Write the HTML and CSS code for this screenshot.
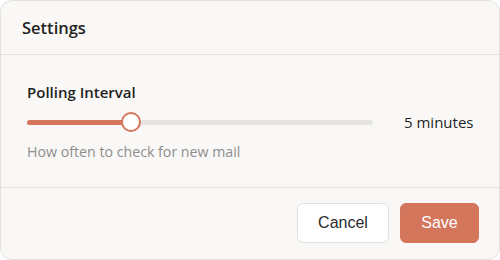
FILE: index.html
```html
<!DOCTYPE html>
<html>
<head>
<meta charset="utf-8">
<link rel="stylesheet" href="styles.css">
</head>
<body>
<div class="card">
  <div class="header"><h2 class="title">Settings</h2></div>
  <div class="body">
    <div class="label">Polling Interval</div>
    <div class="row">
      <div class="track"><div class="fill" style="width:30%"></div><div class="thumb" style="left:30%"></div></div>
      <div class="value">5 minutes</div>
    </div>
    <div class="desc">How often to check for new mail</div>
  </div>
  <div class="footer">
    <button class="btn cancel">Cancel</button>
    <button class="btn save">Save</button>
  </div>
</div>
</body>
</html>
```
FILE: styles.css
```css
html, body { margin: 0; padding: 0; background: #ffffff; }
body { width: 500px; height: 260px; font-family: "Open Sans", "Noto Sans", sans-serif; }
.card {
  box-sizing: border-box;
  width: 500px; height: 260px;
  background: #f9f8f6;
  border: 1px solid #e3e1dd;
  border-radius: 12px;
  display: flex; flex-direction: column;
}
.header {
  height: 53px;
  border-bottom: 1px solid #e3e1dd;
  display: flex; align-items: center;
  padding: 0 21px;
}
.title { margin: 0; font-size: 16.5px; font-weight: 600; color: #1f1f1f; }
.body {
  flex: 1;
  padding: 26px 20px 0 26px;
  border-bottom: 1px solid #e3e1dd;
}
.label { font-size: 15px; font-weight: 600; color: #1f1f1f; line-height: 22px; }
.row { display: flex; align-items: center; margin-top: 8px; height: 22px; }
.track {
  position: relative;
  flex: 0 0 346px;
  height: 5px;
  background: #e6e4e0;
  border-radius: 3px;
}
.fill { height: 100%; background: #d4765c; border-radius: 3px; }
.thumb {
  position: absolute; top: 50%;
  width: 16px; height: 16px;
  margin-left: -10px; margin-top: -10px;
  border: 2px solid #d4765c;
  background: #ffffff;
  border-radius: 50%;
}
.value { margin-left: 31px; font-size: 15px; color: #1f1f1f; white-space: nowrap; }
.desc { margin-top: 10px; font-size: 14.2px; color: #8d8d8d; line-height: 18px; }
.footer {
  height: 71px;
  box-sizing: border-box;
  display: flex; justify-content: flex-end; align-items: flex-start;
  padding: 15px 20px 0 0;
  gap: 11px;
}
.btn {
  height: 40px;
  font-family: "Liberation Sans", Arial, sans-serif;
  font-size: 16px;
  border-radius: 6px;
  padding: 0 20px;
  cursor: pointer;
}
.cancel { background: #ffffff; border: 1px solid #e3e1dd; color: #2b2b2b; width: 92px; }
.save { background: #d4765c; border: 1px solid #d4765c; color: #ffffff; width: 79px; }
```
